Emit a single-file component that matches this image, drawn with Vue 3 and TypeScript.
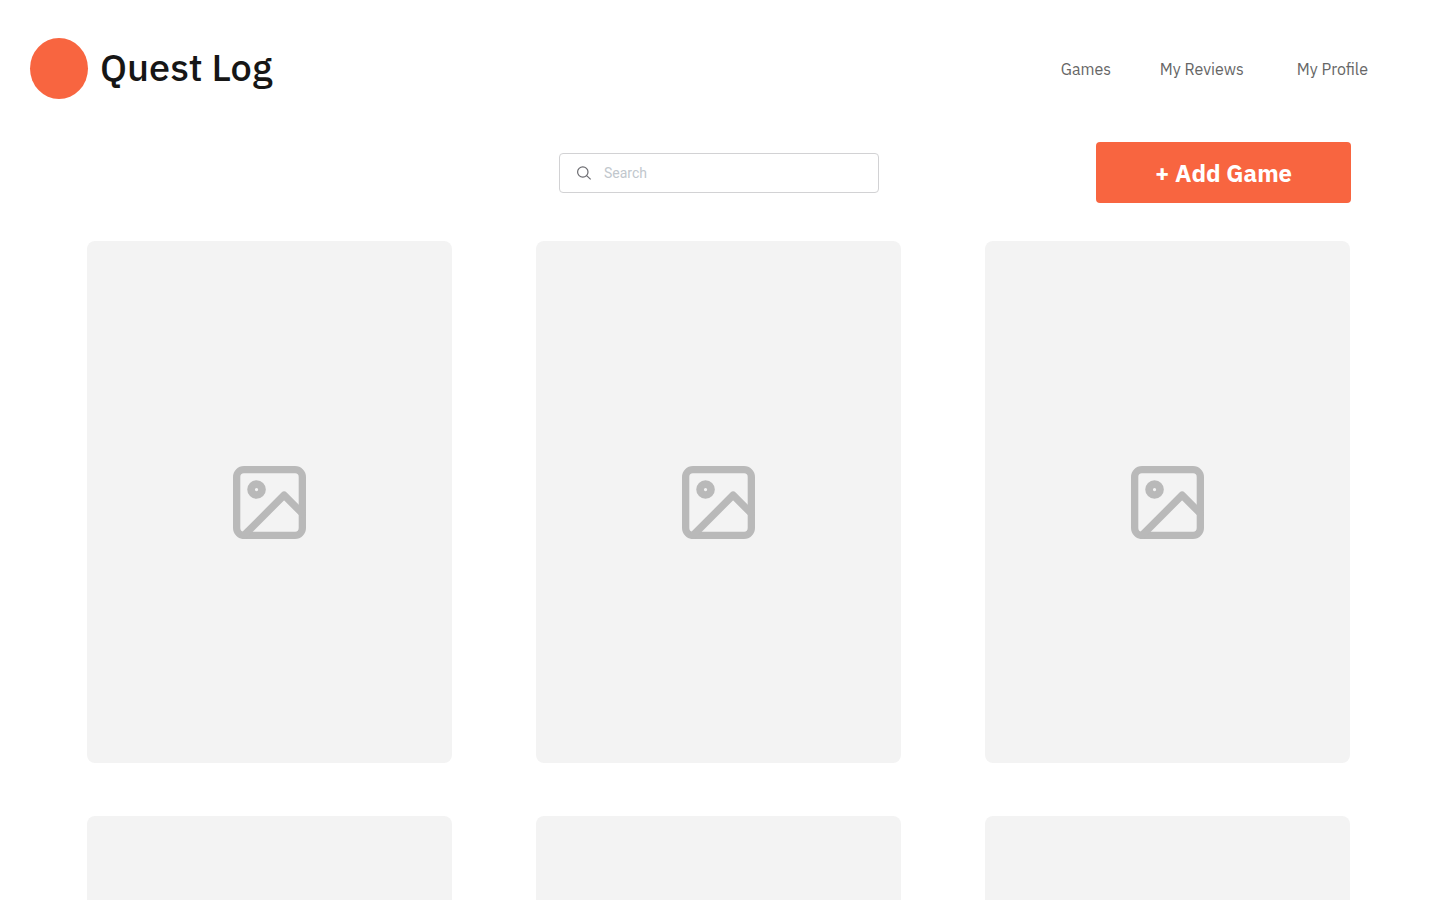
<script setup lang="ts">
import { ref } from 'vue'

interface NavLink {
  label: string
  href: string
}

const links: NavLink[] = [
  { label: 'Games', href: '#games' },
  { label: 'My Reviews', href: '#reviews' },
  { label: 'My Profile', href: '#profile' },
]

const games: number[] = [1, 2, 3, 4, 5, 6]
const query = ref('')
</script>

<template>
  <div class="page">
    <header class="header">
      <div class="brand">
        <span class="logo"></span>
        <h1 class="title">Quest Log</h1>
      </div>
      <nav class="nav">
        <a v-for="link in links" :key="link.label" class="nav-link" :href="link.href">{{ link.label }}</a>
      </nav>
    </header>

    <main>
      <div class="toolbar">
        <label class="search">
          <svg class="search-icon" viewBox="0 0 16 16" fill="none" stroke="currentColor" stroke-width="1.2" aria-hidden="true">
            <circle cx="6.8" cy="7" r="5.2" />
            <path d="M10.6 10.6L14.7 14.4" />
          </svg>
          <input v-model="query" class="search-input" type="text" placeholder="Search" aria-label="Search" />
        </label>
        <button class="add" type="button">+ Add Game</button>
      </div>

      <section class="grid">
        <article v-for="game in games" :key="game" class="card">
          <svg class="card-icon" viewBox="2 2 20 20" fill="none" stroke="currentColor" stroke-width="2" stroke-linecap="round" stroke-linejoin="round" aria-hidden="true">
            <rect x="3" y="3" width="18" height="18" rx="2" />
            <circle cx="8.45" cy="8.45" r="1.5" stroke-width="2.1" />
            <path d="M21 15L16 10L5 21" />
          </svg>
        </article>
      </section>
    </main>
  </div>
</template>

<style>
body {
  background: #ffffff;
}
</style>

<style scoped>
.page {
  font-family: "IBM Plex Sans", Roboto, "Liberation Sans", sans-serif;
}

.header {
  display: flex;
  align-items: center;
  justify-content: space-between;
  padding: 38px 72px 0 30px;
}

.brand {
  display: flex;
  align-items: flex-start;
  gap: 12px;
}

.logo {
  width: 58px;
  height: 61px;
  border-radius: 50%;
  background: #f86540;
}

.title {
  margin: 0;
  color: #161616;
  font-size: 38px;
  line-height: 57px;
  font-weight: 500;
}

.nav {
  display: grid;
  grid-template-columns: 99px 137px auto;
}

.nav-link {
  color: #666666;
  font-size: 16px;
  line-height: 24px;
  text-decoration: none;
}

.toolbar {
  display: grid;
  grid-template-columns: 1fr 320px 1fr;
  align-items: center;
  padding: 43px 89px 38px 87px;
}

.search {
  grid-column: 2;
  display: flex;
  align-items: center;
  gap: 12px;
  box-sizing: border-box;
  height: 40px;
  padding: 0 16px;
  border: 1px solid #d2d2d4;
  border-radius: 4px;
}

.search-icon {
  flex: none;
  width: 16px;
  height: 16px;
  color: #6b6b70;
}

.search-input {
  flex: 1;
  min-width: 0;
  padding: 0;
  border: 0;
  outline: 0;
  background: transparent;
  color: #161616;
  font-family: Roboto, "Liberation Sans", sans-serif;
  font-size: 14px;
  line-height: 20px;
}

.search-input::placeholder {
  color: #c1c7cd;
  opacity: 1;
}

.add {
  justify-self: end;
  width: 255px;
  height: 61px;
  padding: 0;
  border: 0;
  border-radius: 4px;
  background: #f86540;
  color: #ffffff;
  font-family: inherit;
  font-size: 24px;
  line-height: 32px;
  font-weight: 700;
  cursor: pointer;
}

.grid {
  display: grid;
  grid-template-columns: repeat(3, 1fr);
  gap: 53px 84px;
  padding: 0 90px 52px 87px;
}

.card {
  display: flex;
  align-items: center;
  justify-content: center;
  aspect-ratio: 365 / 522;
  border-radius: 8px;
  background: #f3f3f3;
}

.card-icon {
  width: 73px;
  height: 73px;
  color: #b9b9b9;
}
</style>
